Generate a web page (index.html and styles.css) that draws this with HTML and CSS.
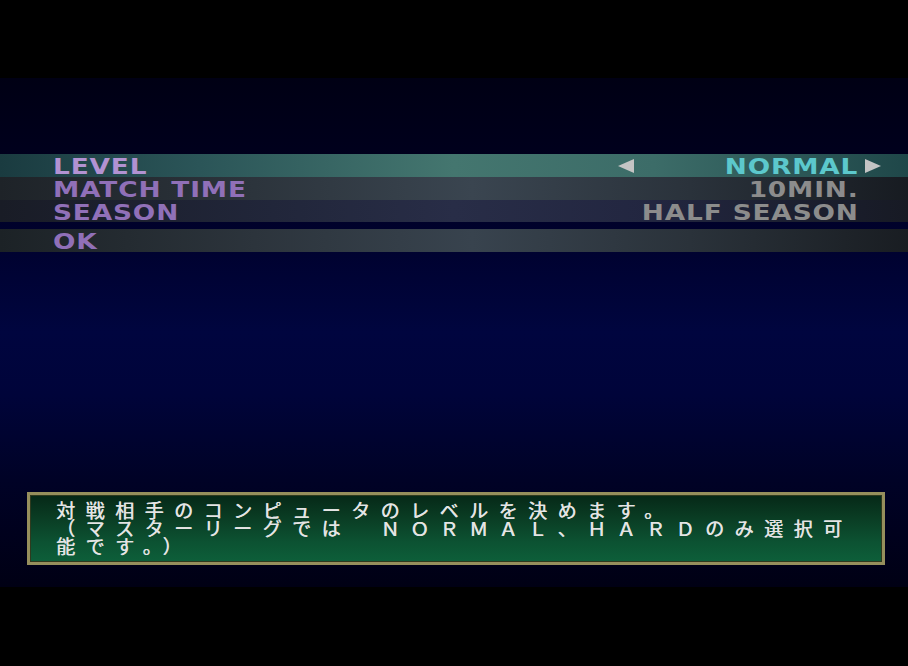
FILE: index.html
```html
<!DOCTYPE html>
<html lang="ja">
<head>
<meta charset="utf-8">
<title>Options</title>
<link rel="stylesheet" href="styles.css">
</head>
<body>
<div class="screen">
  <div class="bar-top"></div>
  <main class="stage">
    <section class="menu">
      <div class="row row-level">
        <span class="label"><span class="lab-text lab-active">LEVEL</span></span>
        <span class="arrow"><svg width="16" height="14" viewBox="0 0 16 14"><polygon points="0,7 16,0 16,14" fill="#c4c4c4"/></svg></span>
        <span class="value"><span class="val-text val-active">NORMAL</span></span>
        <span class="arrow arrow-r"><svg width="16" height="14" viewBox="0 0 16 14"><polygon points="16,7 0,0 0,14" fill="#c4c4c4"/></svg></span>
      </div>
      <div class="row row-time">
        <span class="label"><span class="lab-text">MATCH TIME</span></span>
        <span class="arrow"></span>
        <span class="value"><span class="val-text">10MIN.</span></span>
        <span class="arrow arrow-r"></span>
      </div>
      <div class="row row-season">
        <span class="label"><span class="lab-text">SEASON</span></span>
        <span class="arrow"></span>
        <span class="value"><span class="val-text">HALF SEASON</span></span>
        <span class="arrow arrow-r"></span>
      </div>
      <div class="row row-ok">
        <span class="label"><span class="lab-text">OK</span></span>
      </div>
    </section>
    <section class="help">
      <p class="help-text">対戦相手のコンピュータのレベルを決めます。<br>（マスターリーグでは　ＮＯＲＭＡＬ、ＨＡＲＤのみ選択可<br>能です。）</p>
    </section>
  </main>
  <div class="bar-bottom"></div>
</div>
</body>
</html>
```
FILE: styles.css
```css
html, body {
  margin: 0;
  padding: 0;
  background: #000;
}
.screen {
  width: 908px;
  height: 666px;
  display: flex;
  flex-direction: column;
  overflow: hidden;
}
.bar-top {
  height: 78px;
  background: #000;
}
.bar-bottom {
  flex: 1;
  background: #000;
}
.stage {
  height: 509px;
  box-sizing: border-box;
  padding-top: 76px;
  display: flex;
  flex-direction: column;
  background: linear-gradient(to bottom,
    #000014 0%, #00001c 14%, #000230 34%, #00053f 50%,
    #00043a 62%, #000226 79%, #000014 100%);
}
.menu {
  display: flex;
  flex-direction: column;
}
.row {
  display: flex;
  align-items: center;
  height: 23px;
  padding: 0 27px 0 53px;
  font-family: "DejaVu Sans", sans-serif;
  font-weight: bold;
  font-size: 22px;
  letter-spacing: 0.7px;
  line-height: 21px;
}
.row-level {
  background: linear-gradient(90deg, #1a3b40 0%, #2b5558 22%, #44766f 50%, #3c6c68 72%, #1f4749 100%);
}
.row-time {
  background: linear-gradient(90deg, #1e2328 0%, #2c343c 28%, #3a4550 52%, #2a323b 76%, #171b21 100%);
}
.row-season {
  height: 22px;
  background: linear-gradient(90deg, #191c26 0%, #21263a 30%, #282d47 50%, #222640 72%, #171a24 100%);
}
.row-ok {
  margin-top: 7px;
  background: linear-gradient(90deg, #1c2226 0%, #2c343c 28%, #38434e 52%, #2a323a 76%, #191d22 100%);
}
.label {
  flex: 1;
  padding-top: 2px;
}
.lab-text {
  display: inline-block;
  color: #9070b8;
  transform: scaleX(1.2);
  transform-origin: left center;
}
.lab-active {
  color: #b292d2;
}
.arrow {
  width: 16px;
  height: 14px;
  display: flex;
}
.arrow-r {
  margin-left: 7px;
}
.value {
  width: 224px;
  text-align: right;
  padding-top: 2px;
}
.val-text {
  display: inline-block;
  margin-right: -0.7px;
  color: #8c8c8c;
  transform: scaleX(1.2);
  transform-origin: right center;
}
.val-active {
  color: #5cc8cc;
}
.help {
  margin: auto 23px 22px 27px;
  height: 73px;
  box-sizing: border-box;
  border: 3px solid #968f5c;
  box-shadow: inset 0 0 0 1px #2f3a1e;
  background: linear-gradient(to bottom, #062817 0%, #0a3d24 35%, #0c5232 70%, #0d5f3a 100%);
  padding: 6px 0 0 26px;
}
.help-text {
  margin: 0;
  font-family: "Noto Sans CJK JP", sans-serif;
  font-size: 19px;
  line-height: 18px;
  letter-spacing: 10.5px;
  color: #e4e4e4;
  text-shadow: 0.5px 0 0 #e4e4e4;
  white-space: nowrap;
}
```
